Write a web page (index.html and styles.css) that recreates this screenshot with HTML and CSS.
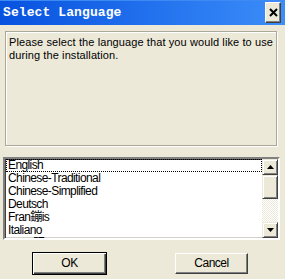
FILE: index.html
```html
<!DOCTYPE html>
<html lang="en">
	<head>
		<meta charset="UTF-8">
		<title>Select Language</title>
		<link rel="stylesheet" href="styles.css">
	</head>
	<body>
		<div class="window">
			<div class="titlebar">
				<span class="title">Select Language</span>
				<button class="close" aria-label="Close">
					<svg viewBox="0 0 9 9" width="9" height="9">
						<path d="M1 1 L8 8 M8 1 L1 8" stroke="#000" stroke-width="2" fill="none"/>
					</svg>
				</button>
			</div>
			<div class="content">
				<div class="group">
					<p class="intro">Please select the language that you would like to use during the installation.</p>
				</div>
				<div class="listbox">
					<ul class="items">
						<li class="item focused">English</li>
						<li class="item">Chinese-Traditional</li>
						<li class="item">Chinese-Simplified</li>
						<li class="item">Deutsch</li>
						<li class="item">Fran鏰is</li>
						<li class="item">Italiano</li>
						<li class="item">Espa駉l</li>
					</ul>
					<div class="scrollbar">
						<div class="sb-btn">
							<svg viewBox="0 0 7 4" width="7" height="4"><path d="M3.5 0 L7 4 L0 4z" fill="#000"/></svg>
						</div>
						<div class="sb-thumb"></div>
						<div class="sb-track"></div>
						<div class="sb-btn">
							<svg viewBox="0 0 7 4" width="7" height="4"><path d="M0 0 L7 0 L3.5 4z" fill="#000"/></svg>
						</div>
					</div>
				</div>
				<div class="actions">
					<button class="button default">OK</button>
					<button class="button">Cancel</button>
				</div>
			</div>
		</div>
	</body>
</html>
```

FILE: styles.css
```css
html, body {
	margin: 0;
	padding: 0;
	background-color: #ECE9D8;
}

.window {
	width: 285px;
	height: 279px;
	background-color: #ECE9D8;
	display: flex;
	flex-direction: column;
	overflow: hidden;
}

.titlebar {
	height: 25px;
	flex: none;
	display: flex;
	align-items: center;
	justify-content: space-between;
	padding: 0 4px 0 3px;
	background: linear-gradient(to right, #0752DF, #2B7BF2 70%, #3C8DF8);
	box-shadow: inset 0 1px #3D8AF5;
}

.title {
	font-family: "Liberation Mono", monospace;
	font-weight: bold;
	font-size: 13px;
	color: #fff;
	letter-spacing: 0.1px;
}

.close {
	all: unset;
	width: 14px;
	height: 19px;
	background-color: #ECE9D8;
	border: 1px solid;
	border-color: #fff #404040 #404040 #fff;
	box-shadow: inset -1px -1px #808080;
	display: flex;
	align-items: center;
	justify-content: center;
}

.content {
	flex: 1;
	display: flex;
	flex-direction: column;
	padding: 6px 0 0 0;
}

.group {
	box-sizing: border-box;
	flex: none;
	margin: 0 8px 0 5px;
	height: 115px;
	border: 1px solid #ACA899;
	box-shadow: inset 1px 1px #fff, 1px 1px #fff;
	padding: 4px 0 4px 3px;
}

.intro {
	margin: 0;
	font-family: "Liberation Sans", Arial, sans-serif;
	font-size: 11px;
	line-height: 13px;
	letter-spacing: 0.1px;
	color: #000;
}

.listbox {
	box-sizing: border-box;
	flex: none;
	margin: 11px 5px 0 3px;
	height: 83px;
	border: 2px solid;
	border-color: #808080 #fff #fff #808080;
	box-shadow: inset 1px 1px #404040, inset -1px -1px #D4D0C8;
	background-color: #fff;
	display: flex;
	overflow: hidden;
}

.items {
	list-style: none;
	margin: 0;
	padding: 0 0 0 1px;
	flex: 1;
}

.item {
	height: 13px;
	line-height: 13px;
	padding-left: 2px;
	white-space: nowrap;
	font-family: "Liberation Sans", "Noto Sans CJK SC", sans-serif;
	font-size: 12px;
	letter-spacing: -0.6px;
	color: #000;
}

.item.focused {
	outline: 1px dotted #000;
	outline-offset: -1px;
}

.scrollbar {
	width: 16px;
	display: flex;
	flex-direction: column;
}

.sb-btn, .sb-thumb {
	box-sizing: border-box;
	background-color: #ECE9D8;
	border: 1px solid;
	border-color: #ECE9D8 #404040 #404040 #ECE9D8;
	box-shadow: inset 1px 1px #fff, inset -1px -1px #808080;
}

.sb-btn {
	height: 16px;
	display: flex;
	align-items: center;
	justify-content: center;
}

.sb-thumb {
	height: 24px;
}

.sb-track {
	flex: 1;
	background: repeating-conic-gradient(#ECE9D8 0 25%, #fff 0 50%) 0 0 / 2px 2px;
}

.actions {
	display: flex;
	align-items: flex-start;
	margin-top: 12px;
	padding-left: 32px;
}

.button {
	all: unset;
	box-sizing: border-box;
	width: 73px;
	height: 21px;
	margin-top: 1px;
	background-color: #ECE9D8;
	border: 1px solid;
	border-color: #fff #404040 #404040 #fff;
	box-shadow: inset -1px -1px #808080;
	font-family: "Liberation Sans", sans-serif;
	font-size: 12px;
	letter-spacing: -0.5px;
	color: #000;
	text-align: center;
	line-height: 19px;
}

.button.default {
	width: 75px;
	height: 23px;
	margin-top: 0;
	border: 1px solid #000;
	box-shadow: inset 1px 1px #fff, inset -1px -1px #404040, inset -2px -2px #808080;
	line-height: 21px;
	margin-right: 68px;
}
```
